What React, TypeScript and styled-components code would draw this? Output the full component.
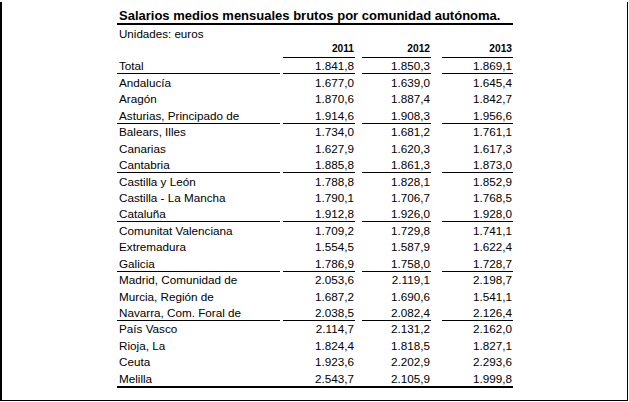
import React from "react";
import styled, { createGlobalStyle } from "styled-components";

const Global = createGlobalStyle`
  html, body { margin: 0; padding: 0; background: #fff; }
  body { font-family: "Liberation Sans", Arial, sans-serif; color: #000; }
`;

const Frame = styled.div`
  box-sizing: border-box;
  width: 628px;
  height: 399px;
  margin-top: 2px;
  border-left: 2px solid #000;
  border-right: 1px solid #000;
  border-bottom: 1px solid #000;
  padding: 7px 0 0 115px;
`;

const Sheet = styled.div`
  width: 396px;
  display: flex;
  flex-direction: column;
`;

const Title = styled.div`
  font-size: 13px;
  font-weight: 700;
  line-height: 14px;
  padding-left: 2px;
  border-bottom: 2px solid #000;
  white-space: nowrap;
`;

const Units = styled.div`
  margin-top: 2px;
  font-size: 11.6px;
  line-height: 14px;
  padding-left: 2px;
`;

const Row = styled.div<{ $final?: boolean; $head?: boolean }>`
  box-sizing: border-box;
  display: flex;
  align-items: flex-end;
  height: ${(p) => (p.$head ? "17px" : p.$final ? "17.45px" : "16.45px")};
  border-bottom: ${(p) => (p.$final ? "2px solid #000" : "none")};
`;

const Cell = styled.div<{ $w: number; $gap: number; $rule?: boolean; $num?: boolean; $head?: boolean; $final?: boolean }>`
  box-sizing: border-box;
  width: ${(p) => p.$w}px;
  margin-left: ${(p) => p.$gap}px;
  height: 100%;
  display: flex;
  align-items: flex-end;
  justify-content: ${(p) => (p.$num ? "flex-end" : "flex-start")};
  padding: ${(p) => (p.$num ? "0 1px 0 0" : "0 0 0 2px")};
  padding-bottom: ${(p) => (p.$head ? "2px" : "0")};
  border-bottom: ${(p) => (p.$final ? "0" : `1px solid ${p.$rule ? "#000" : "transparent"}`)};
  font-size: ${(p) => (p.$head ? "10.2px" : "11.7px")};
  font-weight: ${(p) => (p.$head ? 700 : 400)};
  line-height: ${(p) => (p.$head ? "12px" : "14px")};
  white-space: nowrap;
`;

const cols = [
  { w: 163, gap: 0 },
  { w: 72, gap: 3 },
  { w: 69, gap: 7 },
  { w: 71, gap: 11 },
];

type R = [string, string, string, string, boolean?];

const rows: R[] = [
  ["Total", "1.841,8", "1.850,3", "1.869,1", true],
  ["Andalucía", "1.677,0", "1.639,0", "1.645,4"],
  ["Aragón", "1.870,6", "1.887,4", "1.842,7"],
  ["Asturias, Principado de", "1.914,6", "1.908,3", "1.956,6", true],
  ["Balears, Illes", "1.734,0", "1.681,2", "1.761,1"],
  ["Canarias", "1.627,9", "1.620,3", "1.617,3"],
  ["Cantabria", "1.885,8", "1.861,3", "1.873,0", true],
  ["Castilla y León", "1.788,8", "1.828,1", "1.852,9"],
  ["Castilla - La Mancha", "1.790,1", "1.706,7", "1.768,5"],
  ["Cataluña", "1.912,8", "1.926,0", "1.928,0", true],
  ["Comunitat Valenciana", "1.709,2", "1.729,8", "1.741,1"],
  ["Extremadura", "1.554,5", "1.587,9", "1.622,4"],
  ["Galicia", "1.786,9", "1.758,0", "1.728,7", true],
  ["Madrid, Comunidad de", "2.053,6", "2.119,1", "2.198,7"],
  ["Murcia, Región de", "1.687,2", "1.690,6", "1.541,1"],
  ["Navarra, Com. Foral de", "2.038,5", "2.082,4", "2.126,4", true],
  ["País Vasco", "2.114,7", "2.131,2", "2.162,0"],
  ["Rioja, La", "1.824,4", "1.818,5", "1.827,1"],
  ["Ceuta", "1.923,6", "2.202,9", "2.293,6"],
  ["Melilla", "2.543,7", "2.105,9", "1.999,8"],
];

export default function App() {
  return (
    <>
      <Global />
      <Frame>
        <Sheet>
          <Title>Salarios medios mensuales brutos por comunidad autónoma.</Title>
          <Units>Unidades: euros</Units>
          <Row $head>
            <Cell $w={cols[0].w} $gap={0} $head />
            {["2011", "2012", "2013"].map((y, i) => (
              <Cell key={y} $w={cols[i + 1].w} $gap={cols[i + 1].gap} $num $head $rule>
                {y}
              </Cell>
            ))}
          </Row>
          {rows.map((r, ri) => {
            const final = ri === rows.length - 1;
            return (
              <Row key={r[0]} $final={final}>
                {[r[0], r[1], r[2], r[3]].map((v, ci) => (
                  <Cell
                    key={ci}
                    $w={cols[ci].w}
                    $gap={cols[ci].gap}
                    $num={ci > 0}
                    $rule={!!r[4]}
                    $final={final}
                  >
                    {v}
                  </Cell>
                ))}
              </Row>
            );
          })}
        </Sheet>
      </Frame>
    </>
  );
}
